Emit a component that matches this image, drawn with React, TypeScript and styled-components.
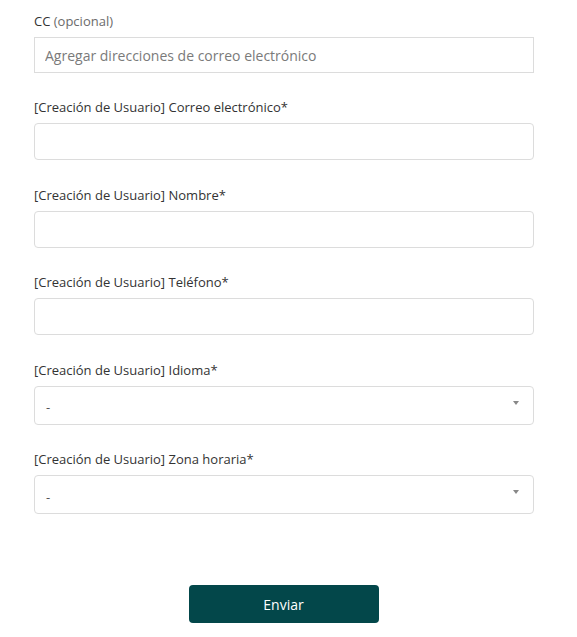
import React from "react";
import styled, { createGlobalStyle } from "styled-components";

const Global = createGlobalStyle`
  html, body { margin: 0; padding: 0; background: #fff; }
  body { font-family: "Open Sans", "Noto Sans", sans-serif; color: #333; }
  * { box-sizing: border-box; }
`;

const Form = styled.form`
  width: 500px;
  margin: 0 0 0 34px;
  padding: 12px 0 14px;
  display: flex;
  flex-direction: column;
`;

const Field = styled.div<{ $gap?: string }>`
  display: flex;
  flex-direction: column;
  margin-bottom: ${(p) => p.$gap ?? "25.5px"};
`;

const Label = styled.label`
  font-size: 13px;
  line-height: 18px;
  color: #333;
  margin-bottom: 7px;
`;

const Optional = styled.span`
  color: #6b6b6b;
`;

const TextInput = styled.input<{ $square?: boolean }>`
  width: 100%;
  height: ${(p) => (p.$square ? "36px" : "37px")};
  border: 1px solid #dcdcdc;
  border-radius: ${(p) => (p.$square ? "0" : "4px")};
  padding: 0 10px;
  font-family: inherit;
  font-size: 14px;
  color: #333;
  background: #fff;
  outline: none;
  &::placeholder { color: #7a7a7a; }
`;

const SelectBox = styled.div`
  position: relative;
  width: 100%;
  height: 39px;
  border: 1px solid #dcdcdc;
  border-radius: 4px;
  display: flex;
  align-items: center;
  padding: 4px 11px 0;
  font-size: 13px;
  color: #555;
  background: #fff;
`;

const Arrow = styled.span`
  position: absolute;
  right: 14px;
  top: 14px;
  width: 0;
  height: 0;
  border-left: 3px solid transparent;
  border-right: 3px solid transparent;
  border-top: 4px solid #888;
`;

const ButtonRow = styled.div`
  display: flex;
  justify-content: center;
`;

const Submit = styled.button`
  width: 190px;
  height: 38px;
  margin-left: -1px;
  border: none;
  border-radius: 4px;
  background: #03474a;
  color: #fff;
  font-family: inherit;
  font-size: 14px;
  cursor: pointer;
`;

const Select = ({ value }: { value: string }) => (
  <SelectBox>
    {value}
    <Arrow />
  </SelectBox>
);

export default function App() {
  return (
    <>
      <Global />
      <Form onSubmit={(e) => e.preventDefault()}>
        <Field $gap="25px">
          <Label>
            CC <Optional>(opcional)</Optional>
          </Label>
          <TextInput $square placeholder="Agregar direcciones de correo electrónico" />
        </Field>
        <Field>
          <Label>[Creación de Usuario] Correo electrónico*</Label>
          <TextInput />
        </Field>
        <Field>
          <Label>[Creación de Usuario] Nombre*</Label>
          <TextInput />
        </Field>
        <Field>
          <Label>[Creación de Usuario] Teléfono*</Label>
          <TextInput />
        </Field>
        <Field>
          <Label>[Creación de Usuario] Idioma*</Label>
          <Select value="-" />
        </Field>
        <Field $gap="71px">
          <Label>[Creación de Usuario] Zona horaria*</Label>
          <Select value="-" />
        </Field>
        <ButtonRow>
          <Submit type="submit">Enviar</Submit>
        </ButtonRow>
      </Form>
    </>
  );
}
